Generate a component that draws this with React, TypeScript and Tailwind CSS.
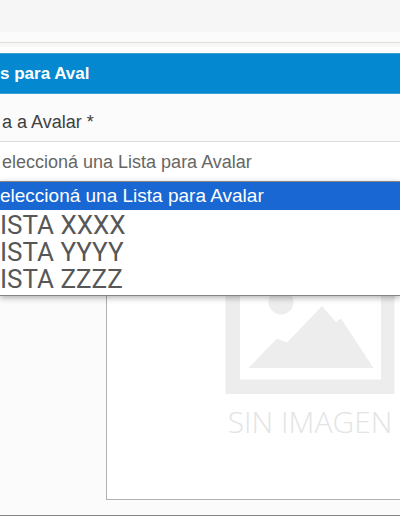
import { useState } from "react";

const placeholder = "eleccioná una Lista para Avalar";
const lists = ["ISTA XXXX", "ISTA YYYY", "ISTA ZZZZ"];

function NoImage() {
  return (
    <figure className="w-[170px] shrink-0 text-[#ededed]">
      <svg viewBox="0 0 170 134" className="block w-full" fill="currentColor" aria-hidden="true">
        <path fillRule="evenodd" d="M0.5 0H169.5V134H0.5ZM15 14V119.5H156V14Z" />
        <circle cx="56" cy="42" r="12.5" />
        <path d="M23.5 108 52 78.5 62 82.5 97 46 111 62 116 58.5 148.5 108Z" />
      </svg>
      <figcaption className="mt-2 whitespace-nowrap text-center font-['Open_Sans',sans-serif] text-[30px] font-light leading-10 text-[#e4e4e4]">
        SIN IMAGEN
      </figcaption>
    </figure>
  );
}

export default function App() {
  const [selected, setSelected] = useState(placeholder);

  return (
    <div className="overflow-hidden border-b border-[#858585] bg-[#fbfbfb] font-['Liberation_Sans',Arial,sans-serif]">
      <header className="h-8 bg-[#f6f6f6]" />
      <div className="h-[11px] border-b border-[#dedede]" />
      <main>
        <div className="h-[10px] border-t-4 border-[#f8f8f5] bg-white" />
        <h1 className="flex h-[41px] items-center border-y border-[#3aa0d6] bg-[#0488cf] text-[17px] font-bold text-white">
          s para Aval
        </h1>
        <label htmlFor="lista" className="flex h-[47px] items-center pt-2 pl-0.5 text-lg text-[#404040]">
          a a Avalar *
        </label>
        <div className="relative">
          <select
            id="lista"
            value={selected}
            onChange={(e) => setSelected(e.target.value)}
            className="block h-10 w-full appearance-none border-t border-[#dcdcdc] bg-white pl-0.5 text-lg text-[#666]"
          >
            <option>{placeholder}</option>
            {lists.map((name) => (
              <option key={name}>{name}</option>
            ))}
          </select>
          <div
            role="listbox"
            aria-label="Lista a Avalar"
            className="absolute inset-x-0 top-full z-10 flex h-[115px] flex-col border-y border-[#858585] bg-white shadow-[0_2px_6px_rgba(0,0,0,0.3)]"
          >
            <button
              role="option"
              aria-selected={selected === placeholder}
              onClick={() => setSelected(placeholder)}
              className="mb-px h-7 shrink-0 bg-[#1967d2] text-left text-[19px] leading-7 text-white"
            >
              {placeholder}
            </button>
            {lists.map((name) => (
              <button
                key={name}
                role="option"
                aria-selected={selected === name}
                onClick={() => setSelected(name)}
                className="h-[27px] shrink-0 text-left font-[Roboto,sans-serif] text-[26px] leading-7 text-[#575757]"
              >
                {name}
              </button>
            ))}
          </div>
        </div>
        <div className="mt-6 mb-[15px] ml-[106px] flex h-[295px] overflow-hidden border border-r-0 border-[#b0b0b0] bg-white pt-[54px] pl-[118px]">
          <NoImage />
        </div>
      </main>
    </div>
  );
}
